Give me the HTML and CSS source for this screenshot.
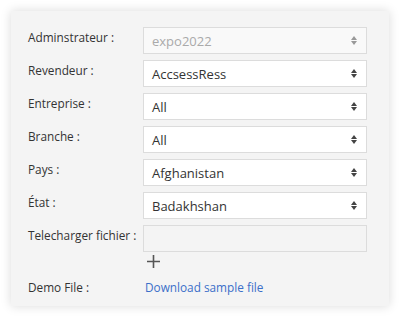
FILE: index.html
```html
<!DOCTYPE html>
<html lang="fr">
<head>
    <meta charset="UTF-8">
    <meta name="viewport" content="width=device-width, initial-scale=1.0">
    <title>Fiche</title>
    <link rel="stylesheet" href="styles.css">
</head>
<body>
    <div class="carte">
        <div class="ligne">
            <label class="etiquette">Adminstrateur :</label>
            <div class="choix desactive"><span>expo2022</span><span class="fleches"></span></div>
        </div>
        <div class="ligne">
            <label class="etiquette">Revendeur :</label>
            <div class="choix"><span>AccsessRess</span><span class="fleches"></span></div>
        </div>
        <div class="ligne">
            <label class="etiquette">Entreprise :</label>
            <div class="choix"><span>All</span><span class="fleches"></span></div>
        </div>
        <div class="ligne">
            <label class="etiquette">Branche :</label>
            <div class="choix"><span>All</span><span class="fleches"></span></div>
        </div>
        <div class="ligne">
            <label class="etiquette">Pays :</label>
            <div class="choix"><span>Afghanistan</span><span class="fleches"></span></div>
        </div>
        <div class="ligne">
            <label class="etiquette">État :</label>
            <div class="choix"><span>Badakhshan</span><span class="fleches"></span></div>
        </div>
        <div class="ligne">
            <label class="etiquette">Telecharger fichier :</label>
            <div class="fichier">
                <div class="zone"></div>
                <svg class="plus" width="15" height="15" viewBox="0 0 15 15">
                    <path d="M7.5 1v13M1 7.5h13" stroke="#555" stroke-width="1.6" fill="none"/>
                </svg>
            </div>
        </div>
        <div class="ligne demo">
            <label class="etiquette">Demo File :</label>
            <a href="#" class="lien">Download sample file</a>
        </div>
    </div>
</body>
</html>
```
FILE: styles.css
```css
body {
    margin: 0;
    padding: 11px;
    background-color: #ffffff;
    font-family: "Open Sans", Arial, sans-serif;
    font-size: 11.8px;
    color: #333;
}
.carte {
    width: 378px;
    height: 295px;
    box-sizing: border-box;
    padding: 16px 22px 0 17px;
    background-color: #f4f4f4;
    box-shadow: 0 0 10px rgba(0, 0, 0, 0.15);
    display: flex;
    flex-direction: column;
    gap: 6px;
}
.ligne {
    display: flex;
    align-items: flex-start;
}
.etiquette {
    width: 115px;
    flex-shrink: 0;
    padding-top: 2px;
    line-height: 17px;
}
.choix {
    flex: 1;
    height: 27px;
    box-sizing: border-box;
    border: 1px solid #dcdcdc;
    background-color: #ffffff;
    padding: 0 9px 0 8px;
    display: flex;
    align-items: center;
    justify-content: space-between;
    font-size: 13px;
}
.choix.desactive {
    background-color: #f9f9f9;
    color: #aaa;
}
.fleches {
    width: 6px;
    height: 9px;
    position: relative;
}
.fleches::before,
.fleches::after {
    content: "";
    position: absolute;
    left: 0;
    border-left: 3px solid transparent;
    border-right: 3px solid transparent;
}
.fleches::before {
    top: 0;
    border-bottom: 4px solid #444;
}
.fleches::after {
    bottom: 0;
    border-top: 4px solid #444;
}
.desactive .fleches::before {
    border-bottom-color: #999;
}
.desactive .fleches::after {
    border-top-color: #999;
}
.fichier {
    flex: 1;
    display: flex;
    flex-direction: column;
}
.zone {
    height: 27px;
    box-sizing: border-box;
    border: 1px solid #dcdcdc;
    background-color: #f4f4f4;
}
.plus {
    margin: 2px 0 0 3px;
}
.demo {
    margin-top: 2px;
}
.lien {
    color: #3b6fc9;
    text-decoration: none;
    padding: 2px 0 0 2px;
    line-height: 17px;
}
```
